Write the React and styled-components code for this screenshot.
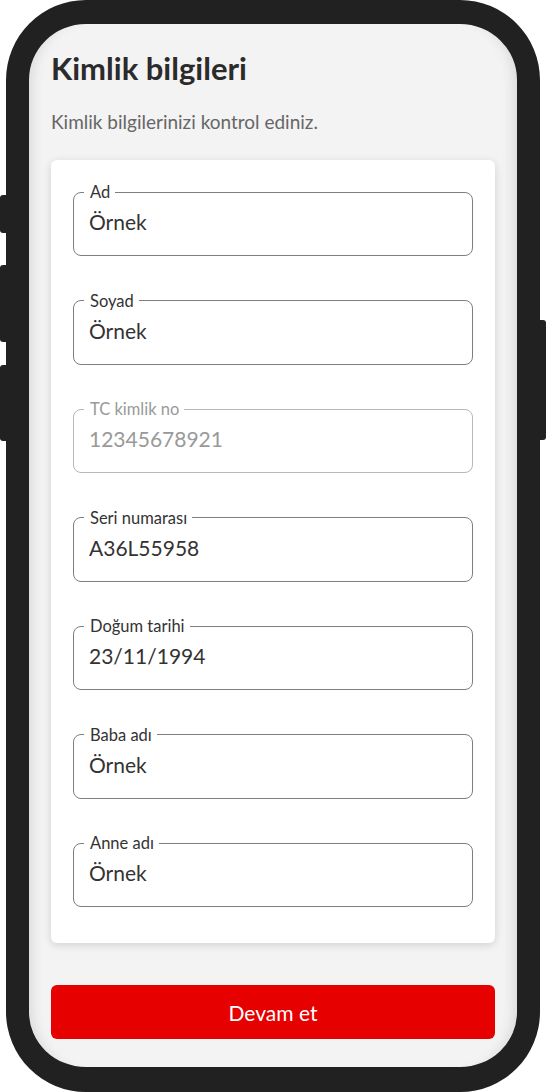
import React from 'react';
import styled, { createGlobalStyle } from 'styled-components';

const GlobalStyle = createGlobalStyle`
  html, body {
    margin: 0;
    padding: 0;
    background: #ffffff;
  }
  body {
    font-family: Lato, 'Noto Sans', sans-serif;
  }
`;

const fields = [
  { label: 'Ad', value: 'Örnek' },
  { label: 'Soyad', value: 'Örnek' },
  { label: 'TC kimlik no', value: '12345678921', disabled: true },
  { label: 'Seri numarası', value: 'A36L55958' },
  { label: 'Doğum tarihi', value: '23/11/1994' },
  { label: 'Baba adı', value: 'Örnek' },
  { label: 'Anne adı', value: 'Örnek' },
];

const App = () => {
  return (
    <>
      <GlobalStyle />
      <Stage>
        <Phone>
          <SideKey $side="left" $top={195} $height={38} />
          <SideKey $side="left" $top={265} $height={77} />
          <SideKey $side="left" $top={365} $height={76} />
          <SideKey $side="right" $top={320} $height={120} />
          <Screen>
            <Title>Kimlik bilgileri</Title>
            <Subtitle>Kimlik bilgilerinizi kontrol ediniz.</Subtitle>
            <Card>
              {fields.map((f) => (
                <Field key={f.label} $disabled={f.disabled}>
                  <Legend $disabled={f.disabled}>{f.label}</Legend>
                  <Value $disabled={f.disabled}>{f.value}</Value>
                </Field>
              ))}
            </Card>
            <Spacer />
            <PrimaryButton type="button">Devam et</PrimaryButton>
          </Screen>
        </Phone>
      </Stage>
    </>
  );
};

const Stage = styled.div`
  width: 546px;
  height: 1092px;
  padding-left: 6px;
  box-sizing: border-box;
  overflow: hidden;
`;

const Phone = styled.div`
  position: relative;
  width: 534px;
  height: 1092px;
  box-sizing: border-box;
  border: 23px solid #212121;
  border-top-width: 24px;
  border-bottom-width: 25px;
  border-radius: 80px;
  background: #f3f3f3;
`;

const SideKey = styled.span`
  position: absolute;
  top: ${(p) => p.$top - 24}px;
  height: ${(p) => p.$height}px;
  width: 12px;
  background: #212121;
  border-radius: 3px;
  ${(p) => (p.$side === 'left' ? 'left: -29px;' : 'right: -29px;')}
`;

const Screen = styled.div`
  height: 100%;
  box-sizing: border-box;
  border-radius: 57px;
  overflow: hidden;
  display: flex;
  flex-direction: column;
  padding: 24px 22px 28px 22px;
  box-shadow: inset 14px 0 14px -12px rgba(0, 0, 0, 0.12),
    inset -14px 0 14px -12px rgba(0, 0, 0, 0.12);
`;

const Title = styled.h1`
  margin: 0;
  font-size: 31px;
  line-height: 40px;
  font-weight: 700;
  color: #2b2b2b;
`;

const Subtitle = styled.p`
  margin: 22px 0 0;
  font-size: 19px;
  line-height: 24px;
  color: #666666;
`;

const Card = styled.div`
  margin-top: 26px;
  background: #ffffff;
  border-radius: 6px;
  box-shadow: 0 2px 8px rgba(0, 0, 0, 0.14);
  padding: 23px 22px 36px;
  display: flex;
  flex-direction: column;
  gap: 35.5px;
`;

const Field = styled.fieldset`
  margin: 0;
  height: 73px;
  box-sizing: border-box;
  border: 1.5px solid ${(p) => (p.$disabled ? '#b8b8b8' : '#7e7e7e')};
  border-radius: 8px;
  padding: 0 15px;
  min-width: 0;
`;

const Legend = styled.legend`
  margin-left: -5px;
  padding: 0 5px 0 6px;
  font-size: 16.5px;
  line-height: 18px;
  color: ${(p) => (p.$disabled ? '#999999' : '#333333')};
`;

const Value = styled.div`
  margin-top: 6px;
  font-size: 21px;
  line-height: 30px;
  color: ${(p) => (p.$disabled ? '#999999' : '#333333')};
`;

const Spacer = styled.div`
  flex: 1;
`;

const PrimaryButton = styled.button`
  height: 54px;
  width: 100%;
  border: 0;
  border-radius: 6px;
  background: #e60000;
  color: #ffffff;
  font-family: inherit;
  font-size: 21px;
  cursor: pointer;
`;

export default App;
